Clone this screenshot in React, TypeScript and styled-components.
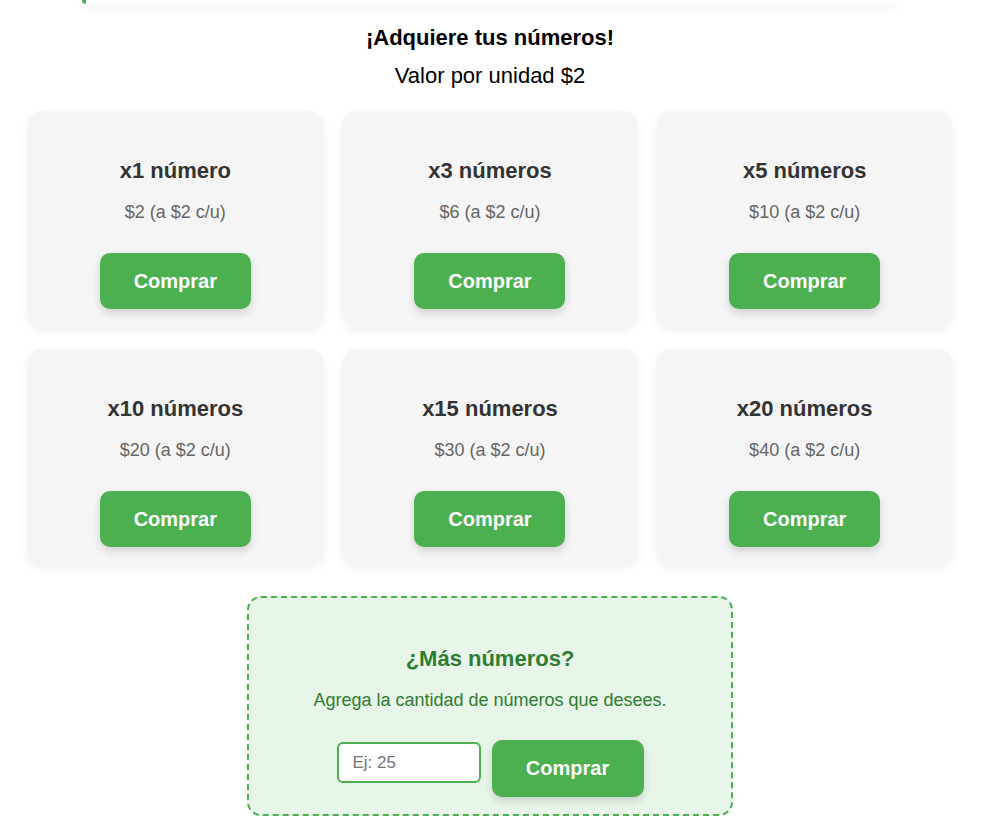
import React from "react";
import styled, { createGlobalStyle } from "styled-components";

const GlobalStyle = createGlobalStyle`
  html, body {
    margin: 0;
    padding: 0;
    background: #ffffff;
    font-family: "Liberation Sans", Arial, sans-serif;
  }
  * { box-sizing: border-box; }
`;

const Page = styled.div`
  width: 991px;
  padding: 0 39px 40px 28px;
`;

const PrevCardEdge = styled.div`
  height: 4px;
  margin: 0 52px 0 54px;
  background: #ffffff;
  border-left: 4px solid #4caf50;
  border-radius: 0 0 12px 12px;
  box-shadow: 0 4px 10px rgba(0, 0, 0, 0.07);
`;

const Heading = styled.h2`
  margin: 21px 0 0;
  font-size: 22px;
  line-height: 25px;
  font-weight: 700;
  color: #000;
  text-align: center;
`;

const SubHeading = styled.p`
  margin: 13px 0 0;
  font-size: 22px;
  line-height: 25px;
  color: #000;
  text-align: center;
`;

const Grid = styled.div`
  margin-top: 23px;
  display: grid;
  grid-template-columns: repeat(3, 1fr);
  column-gap: 20px;
  row-gap: 23px;
`;

const Card = styled.div`
  background: #f5f5f5;
  border-radius: 14px;
  box-shadow: 0 4px 10px rgba(0, 0, 0, 0.07);
  padding: 47px 20px 17px;
  display: flex;
  flex-direction: column;
  align-items: center;
`;

const CardTitle = styled.h3`
  margin: 0;
  font-size: 22px;
  line-height: 25px;
  font-weight: 700;
  color: #333;
`;

const Price = styled.p`
  margin: 19px 0 0;
  font-size: 18px;
  line-height: 21px;
  color: #666;
`;

const BuyButton = styled.button<{ $top?: number; $w?: number; $h?: number }>`
  margin-top: ${(p) => p.$top ?? 30}px;
  height: ${(p) => p.$h ?? 56}px;
  width: ${(p) => p.$w ?? 151}px;
  border: none;
  border-radius: 10px;
  background: #4caf50;
  color: #fff;
  font-family: "Liberation Sans", Arial, sans-serif;
  font-size: 20px;
  font-weight: 700;
  box-shadow: 0 4px 8px rgba(0, 0, 0, 0.15);
  cursor: pointer;
`;

const CustomBox = styled.div`
  width: 486px;
  margin: 32px auto 0;
  background: #e8f5e9;
  border: 2px dashed #4caf50;
  border-radius: 14px;
  padding: 48px 20px 17px;
  display: flex;
  flex-direction: column;
  align-items: center;
`;

const CustomTitle = styled.h3`
  margin: 0;
  font-size: 22px;
  line-height: 25px;
  font-weight: 700;
  color: #2e7d32;
`;

const CustomText = styled.p`
  margin: 19px 0 0;
  font-size: 18px;
  line-height: 21px;
  color: #2e7d32;
`;

const CustomRow = styled.div`
  margin-top: 29px;
  display: flex;
  align-items: flex-start;
  gap: 11px;
`;

const QtyInput = styled.input`
  margin-top: 2px;
  width: 144px;
  height: 41px;
  border: 2px solid #4caf50;
  border-radius: 6px;
  background: #fff;
  padding: 0 14px;
  font-family: "Liberation Sans", Arial, sans-serif;
  font-size: 17px;
  color: #333;
  outline: none;
  &::placeholder { color: #757575; }
`;

const packs = [
  { qty: 1, label: "x1 número" },
  { qty: 3, label: "x3 números" },
  { qty: 5, label: "x5 números" },
  { qty: 10, label: "x10 números" },
  { qty: 15, label: "x15 números" },
  { qty: 20, label: "x20 números" },
];

export default function App() {
  return (
    <>
      <GlobalStyle />
      <Page>
        <PrevCardEdge />
        <Heading>¡Adquiere tus números!</Heading>
        <SubHeading>Valor por unidad $2</SubHeading>
        <Grid>
          {packs.map((p) => (
            <Card key={p.qty}>
              <CardTitle>{p.label}</CardTitle>
              <Price>${p.qty * 2} (a $2 c/u)</Price>
              <BuyButton>Comprar</BuyButton>
            </Card>
          ))}
        </Grid>
        <CustomBox>
          <CustomTitle>¿Más números?</CustomTitle>
          <CustomText>Agrega la cantidad de números que desees.</CustomText>
          <CustomRow>
            <QtyInput type="number" placeholder="Ej: 25" />
            <BuyButton $top={0} $w={152} $h={57}>Comprar</BuyButton>
          </CustomRow>
        </CustomBox>
      </Page>
    </>
  );
}
